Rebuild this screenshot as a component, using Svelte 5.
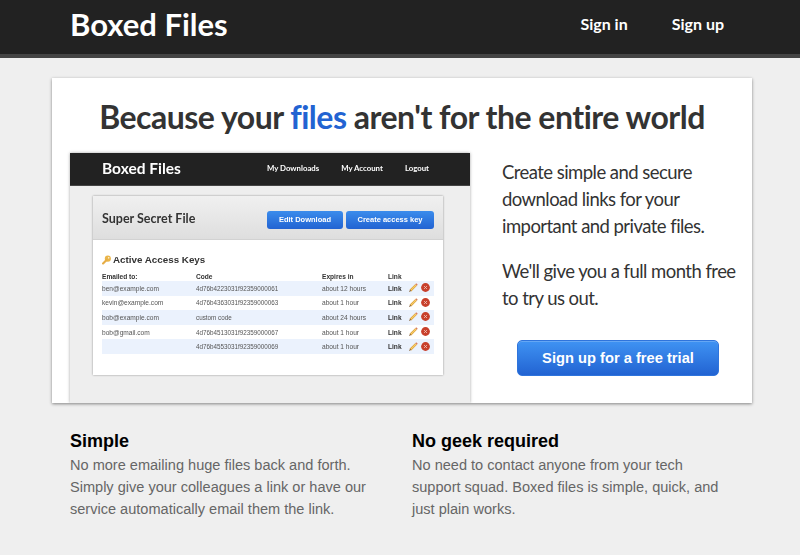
<script>
  const keys = [
    { email: 'ben@example.com', code: '4d76b4223031f92359000061', expires: 'about 12 hours' },
    { email: 'kevin@example.com', code: '4d76b4363031f92359000063', expires: 'about 1 hour' },
    { email: 'bob@example.com', code: 'custom code', expires: 'about 24 hours' },
    { email: 'bob@gmail.com', code: '4d76b4513031f92359000067', expires: 'about 1 hour' },
    { email: '', code: '4d76b4553031f92359000069', expires: 'about 1 hour' },
  ];
</script>

<header class="topbar">
  <a class="logo" href="#home">Boxed Files</a>
  <nav class="topnav">
    <a href="#signin">Sign in</a>
    <a href="#signup">Sign up</a>
  </nav>
</header>

<main class="card">
  <h1>Because your <span class="accent">files</span> aren't for the entire world</h1>
  <div class="hero">
    <div class="shot">
      <div class="shot-bar">
        <span class="shot-logo">Boxed Files</span>
        <div class="shot-nav">
          <span>My Downloads</span>
          <span>My Account</span>
          <span>Logout</span>
        </div>
      </div>
      <div class="panel">
        <div class="panel-head">
          <h3>Super Secret File</h3>
          <div class="panel-actions">
            <span class="mini-btn edit">Edit Download</span>
            <span class="mini-btn create">Create access key</span>
          </div>
        </div>
        <div class="panel-body">
          <h4>
            <svg class="key" viewBox="0 0 10 10" width="9" height="10">
              <circle cx="6.5" cy="3.5" r="3.4" fill="#eab54a" />
              <path d="M5 5 1.2 8.8" stroke="#e6ad45" stroke-width="2.4" stroke-linecap="round" />
              <circle cx="7.4" cy="2.6" r=".9" fill="#fdf3d8" />
            </svg>
            Active Access Keys
          </h4>
          <div class="key-table">
            <div class="key-row head">
              <span>Emailed to:</span>
              <span>Code</span>
              <span>Expires in</span>
              <span>Link</span>
              <span></span>
            </div>
            {#each keys as key, i}
              <div class="key-row" class:odd={i % 2 === 0}>
                <span>{key.email}</span>
                <span class="code">{key.code}</span>
                <span>{key.expires}</span>
                <b>Link</b>
                <span class="row-icons">
                  <svg viewBox="0 0 9 9" width="9" height="9">
                    <path d="M1.4 7.6 7 2" stroke="#d99a35" stroke-width="2.4" />
                    <path d="M1.4 7.6 7 2" stroke="#f7cf6a" stroke-width="1.1" />
                    <path d="M7 2 8 1" stroke="#d9805e" stroke-width="2.2" />
                    <path d="M.4 8.6 1.8 7.2" stroke="#8a6a45" stroke-width="1.2" />
                  </svg>
                  <svg viewBox="0 0 9 9" width="9" height="9">
                    <circle cx="4.5" cy="4.5" r="4.4" fill="#c8402c" />
                    <path d="M3.2 3.2 5.8 5.8M5.8 3.2 3.2 5.8" stroke="#f0c4bb" stroke-width="1" />
                  </svg>
                </span>
              </div>
            {/each}
          </div>
        </div>
      </div>
    </div>
    <div class="pitch">
      <p>Create simple and secure download links for your important and private files.</p>
      <p>We'll give you a full month free to try us out.</p>
      <a class="cta" href="#trial">Sign up for a free trial</a>
    </div>
  </div>
</main>

<section class="features">
  <div>
    <h2>Simple</h2>
    <p>No more emailing huge files back and forth. Simply give your colleagues a link or have our service automatically email them the link.</p>
  </div>
  <div>
    <h2>No geek required</h2>
    <p>No need to contact anyone from your tech support squad. Boxed files is simple, quick, and just plain works.</p>
  </div>
</section>

<style>
  :global(body) {
    background: #efefef;
    font-family: "Liberation Sans", Arial, sans-serif;
    overflow: hidden;
  }

  a {
    text-decoration: none;
  }

  .topbar {
    display: flex;
    align-items: center;
    justify-content: space-between;
    box-sizing: border-box;
    height: 58px;
    padding: 0 76px 6px 70px;
    background: #222;
    border-bottom: 4px solid #444;
  }

  .logo {
    color: #fff;
    font: 700 31px/1 Lato, sans-serif;
  }

  .topnav {
    display: flex;
    gap: 44px;
  }

  .topnav a {
    color: #fff;
    font: 700 16px/1 Lato, sans-serif;
  }

  .card {
    box-sizing: border-box;
    width: 700px;
    height: 325px;
    margin: 20px 0 0 52px;
    background: #fff;
    box-shadow: 0 1px 3px rgba(0, 0, 0, 0.45);
    overflow: hidden;
  }

  h1 {
    margin: 0;
    padding-top: 21px;
    height: 54px;
    color: #333;
    font: 700 32px/36px Lato, sans-serif;
    letter-spacing: -0.5px;
    text-align: center;
  }

  .accent {
    color: #2263d2;
  }

  .hero {
    display: flex;
  }

  .shot {
    flex: none;
    width: 400px;
    height: 250px;
    margin-left: 18px;
    background: #eee;
    box-shadow: 0 0 3px rgba(0, 0, 0, 0.35);
    filter: blur(0.25px);
  }

  .shot-bar {
    display: flex;
    align-items: center;
    justify-content: space-between;
    box-sizing: border-box;
    height: 33px;
    padding: 0 41px 0 32px;
    background: #222;
    border-bottom: 1px solid #444;
    color: #fff;
  }

  .shot-logo {
    font: 700 15.5px/1 Lato, sans-serif;
  }

  .shot-nav {
    display: flex;
    gap: 22px;
    font: 700 7.8px/1 Lato, sans-serif;
  }

  .panel {
    width: 350px;
    height: 179px;
    margin: 10px 0 0 23px;
    background: #fff;
    box-shadow: 0 0 2px rgba(0, 0, 0, 0.4);
  }

  .panel-head {
    display: flex;
    align-items: center;
    justify-content: space-between;
    box-sizing: border-box;
    height: 44px;
    padding: 5px 9px 0;
    background: linear-gradient(#f0f0f0, #dedede);
    border-bottom: 1px solid #d2d2d2;
  }

  h3 {
    margin: 0 0 1px;
    color: #333;
    font: 700 12.5px/1 Lato, sans-serif;
  }

  .panel-actions {
    display: flex;
    gap: 3px;
  }

  .mini-btn {
    box-sizing: border-box;
    height: 18px;
    border-radius: 3px;
    background: linear-gradient(#3b8cec, #2263d2);
    color: #fff;
    font: 700 7.5px/18px "Liberation Sans", sans-serif;
    text-align: center;
  }

  .edit {
    width: 76px;
  }

  .create {
    width: 88px;
  }

  .panel-body {
    padding: 14px 9px 0;
  }

  h4 {
    display: flex;
    align-items: center;
    gap: 2px;
    margin: 0 0 5px;
    color: #333;
    font: 700 9.8px/12px "Liberation Sans", sans-serif;
  }

  .key-row {
    display: grid;
    grid-template-columns: 94px 126px 66px 21px 1fr;
    align-items: center;
    height: 14.6px;
    color: #555;
    font-size: 6.6px;
  }

  .code {
    font-size: 6.3px;
  }

  .key-row.head {
    height: 10px;
    color: #333;
    font-weight: 700;
  }

  .key-row.odd {
    background: #ebf2fd;
  }

  .key-row b {
    color: #333;
  }

  .row-icons {
    display: flex;
    gap: 3px;
    margin-top: -1px;
  }

  .pitch {
    box-sizing: border-box;
    width: 282px;
    padding: 6px 0 0 32px;
    color: #333;
    font: 400 18.5px/27px Lato, sans-serif;
    letter-spacing: -0.55px;
  }

  .pitch p {
    margin: 0 0 18px;
  }

  .cta {
    display: block;
    box-sizing: border-box;
    width: 202px;
    height: 36px;
    margin: 28px 0 0 15px;
    border-radius: 5px;
    border: 1px solid #2f74dc;
    background: linear-gradient(#3f93f3, #2263d2);
    box-shadow: inset 0 1px 0 rgba(255, 255, 255, 0.2);
    color: #fff;
    font: 700 14.7px/34px "Liberation Sans", sans-serif;
    letter-spacing: 0;
    text-align: center;
  }

  .features {
    display: grid;
    grid-template-columns: 342px 320px;
    padding: 28px 0 0 70px;
  }

  h2 {
    margin: 0;
    color: #000;
    font: 700 18px/20px "Liberation Sans", sans-serif;
  }

  .features p {
    margin: 3px 0 0;
    width: 315px;
    color: #666;
    font-size: 14.55px;
    line-height: 22px;
  }
</style>
